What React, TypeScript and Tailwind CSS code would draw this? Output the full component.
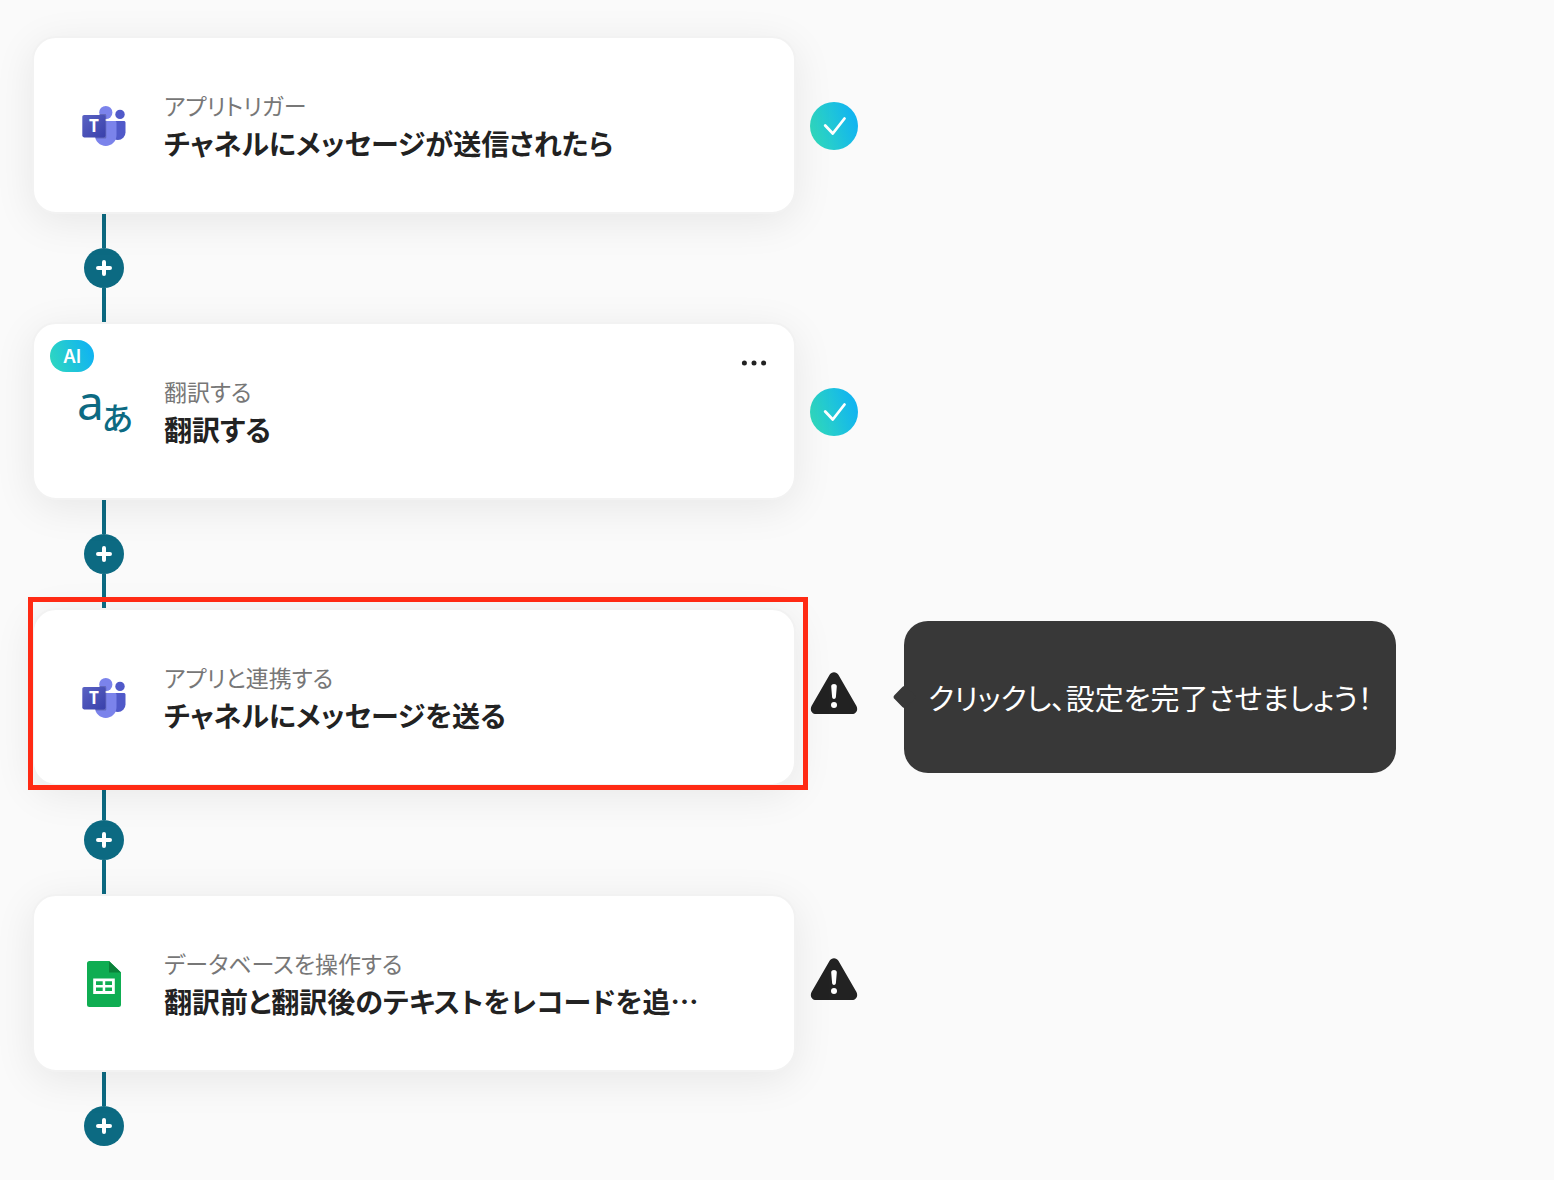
import React from 'react'
import clsx from 'clsx'

type TStep = {
  id: number
  icon: 'teams' | 'translate' | 'sheets'
  label: string
  title: string
  status: 'done' | 'warning'
  isAi?: boolean
  hasMenu?: boolean
  isSelected?: boolean
  hint?: string
}

const steps: TStep[] = [
  { id: 1, icon: 'teams', label: 'アプリトリガー', title: 'チャネルにメッセージが送信されたら', status: 'done' },
  { id: 2, icon: 'translate', label: '翻訳する', title: '翻訳する', status: 'done', isAi: true, hasMenu: true },
  {
    id: 3,
    icon: 'teams',
    label: 'アプリと連携する',
    title: 'チャネルにメッセージを送る',
    status: 'warning',
    isSelected: true,
    hint: 'クリックし、設定を完了させましょう！',
  },
  { id: 4, icon: 'sheets', label: 'データベースを操作する', title: '翻訳前と翻訳後のテキストをレコードを追…', status: 'warning' },
]

const TeamsIcon = () => (
  <svg className="size-12 shrink-0" viewBox="0 0 48 48" aria-hidden="true">
    <defs>
      <linearGradient id="teams-tile" x1="0" y1="0" x2="1" y2="1">
        <stop offset="0" stopColor="#5a62c3" />
        <stop offset="1" stopColor="#3940ab" />
      </linearGradient>
    </defs>
    <circle cx="40" cy="13.4" r="4.7" fill="#5059c9" />
    <path d="M34 20h9.800c1 0 1.700.7 1.700 1.700V31.500a7.600 7.600 0 0 1-7.600 7.600c-1.400 0-2.700-.4-3.900-1.100z" fill="#5059c9" />
    <circle cx="25.800" cy="11.500" r="6.600" fill="#7b83eb" />
    <path d="M16 20h18.800c1 0 1.700.7 1.700 1.700v12.500a10.750 10.750 0 0 1-21.500 0V21z" fill="#7b83eb" />
    <path d="M19.400 13h5.600c.9 0 1.300.7 1.300 1.600v21.400c0 1-.5 1.500-1.400 1.500H15.600c-.4-1.100-.6-2.300-.6-3.500V20h4.400z" fill="#000" opacity=".2" />
    <rect x="2.300" y="14" width="23.200" height="22.400" rx="1.800" fill="url(#teams-tile)" />
    <text x="13.900" y="31" textAnchor="middle" fontFamily="Open Sans, sans-serif" fontWeight="700" fontSize="17" fill="#fff">
      T
    </text>
  </svg>
)

const TranslateIcon = () => (
  <svg className="size-12 shrink-0 overflow-visible" viewBox="0 0 48 48" fill="#0c6a82" aria-hidden="true">
    <text x="-3" y="33" fontFamily="Noto Sans, sans-serif" fontSize="48">
      a
    </text>
    <text x="22" y="43" fontFamily="Noto Sans CJK JP, sans-serif" fontWeight="500" fontSize="32">
      あ
    </text>
  </svg>
)

const SheetsIcon = () => (
  <svg className="size-12 shrink-0" viewBox="0 0 48 48" aria-hidden="true">
    <path d="M9.500 2H29l12 11.500V45.500a2.500 2.500 0 0 1-2.500 2.500h-29A2.500 2.500 0 0 1 7 45.500v-41A2.500 2.500 0 0 1 9.500 2z" fill="#0fad52" />
    <path d="M29 2l12 11.500H29z" fill="#0a8139" />
    <path d="M13.200 19.500h21.600v15.500H13.200zM16 22.300v3.600h6.700v-3.600zM25.200 22.300v3.600h6.800v-3.600zM16 28.500v3.600h6.700v-3.600zM25.200 28.500v3.600h6.800v-3.600z" fill="#fff" fillRule="evenodd" />
  </svg>
)

const StepIcon = ({ icon }: { icon: TStep['icon'] }) => {
  if (icon === 'teams') return <TeamsIcon />
  if (icon === 'translate') return <TranslateIcon />
  return <SheetsIcon />
}

const StepStatus = ({ status }: { status: TStep['status'] }) => {
  if (status === 'done') {
    return (
      <span className="mt-0.5 ml-[14px] flex size-12 shrink-0 rounded-full bg-linear-[72deg] from-[#30d9bd] from-10% to-[#12b5ef] to-85%" role="img" aria-label="設定済み">
        <svg className="size-12" viewBox="0 0 48 48" fill="none" stroke="#fff" strokeWidth="2.800" strokeLinecap="round" strokeLinejoin="round">
          <path d="M15.200 23.500l7.600 8 11.700-15" />
        </svg>
      </span>
    )
  }
  return (
    <svg className="ml-[14px] h-14 w-12 shrink-0" viewBox="0 0 48 56" role="img" aria-label="未設定">
      <path
        d="M19.600 5.700C21.500 2.300 26.500 2.300 28.400 5.700L46.300 36.800C48.500 40.600 46.300 45 42 45H6C1.700 45-.5 40.600 1.700 36.800z"
        fill="#222"
      />
      <path d="M21.200 17.500c0-3.200 5.600-3.200 5.600 0l-.9 10.500c-.2 2.500-3.600 2.500-3.800 0z" fill="#fff" />
      <circle cx="24" cy="36" r="3" fill="#fff" />
    </svg>
  )
}

const Hint = ({ text }: { text: string }) => (
  <div role="tooltip" className="relative ml-[46px] flex min-h-[152px] items-center rounded-3xl bg-[#383838] px-6">
    <span className="absolute top-1/2 -left-2 size-[17px] -translate-y-1/2 rotate-45 rounded-[3px] bg-[#383838]" />
    <p className="relative text-[29px] leading-[38px] text-white">{text}</p>
  </div>
)

const AddStep = ({ isLast }: { isLast: boolean }) => (
  <div className="ml-[52px] flex w-10 flex-col items-center">
    <span className="h-[34px] w-1 bg-[#0c6a82]" />
    <button type="button" aria-label="ステップを追加" className="flex size-10 items-center justify-center rounded-full bg-[#0c6a82]">
      <svg className="size-4" viewBox="0 0 16 16" stroke="#fff" strokeWidth="4" strokeLinecap="round">
        <path d="M8 2v12M2 8h12" />
      </svg>
    </button>
    {!isLast && <span className="h-[34px] w-1 bg-[#0c6a82]" />}
  </div>
)

const StepCard = ({ step }: { step: TStep }) => (
  <div className="flex items-center">
    <div className="relative w-full max-w-[764px] min-w-0 shrink">
      <div className="relative flex min-h-[178px] items-center gap-9 rounded-3xl border-2 border-[#f2f2f2] bg-white pr-12 pl-[46px] shadow-[0_8px_40px_rgba(0,0,0,0.08)]">
        {step.isAi && (
          <span className="absolute top-4 left-4 flex h-8 w-11 items-center justify-center rounded-full bg-linear-[72deg] from-[#30d9bd] to-[#12b5ef] to-85% pt-px font-['Inter'] text-lg font-semibold text-white">
            AI
          </span>
        )}
        <StepIcon icon={step.icon} />
        <div className="min-w-0 pb-[3px]">
          <p className="text-[23px] leading-[38px] text-[#777]">{step.label}</p>
          <h2 className="text-[28px] leading-[38px] font-bold text-[#222]">{step.title}</h2>
        </div>
        {step.hasMenu && (
          <button type="button" aria-label="メニュー" className="absolute top-6 right-6 size-8">
            <svg className="size-8" viewBox="0 0 32 32" fill="#222">
              <circle cx="6.400" cy="15" r="2.500" />
              <circle cx="16" cy="15" r="2.500" />
              <circle cx="25.600" cy="15" r="2.500" />
            </svg>
          </button>
        )}
      </div>
      {step.isSelected && <span className="pointer-events-none absolute -top-[11px] -right-3 -bottom-1 -left-1 z-10 border-[5px] border-[#ff2a14]" />}
    </div>
    <StepStatus status={step.status} />
    {step.hint && <Hint text={step.hint} />}
  </div>
)

const App = () => {
  return (
    <main
      lang="ja"
      className={clsx(
        'min-h-screen bg-[#fafafa] px-8 pt-9 pb-[34px]',
        "font-['Noto_Sans_CJK_JP',sans-serif] [font-feature-settings:'palt']"
      )}
    >
      {steps.map((step, index) => (
        <section key={step.id}>
          <StepCard step={step} />
          <AddStep isLast={index === steps.length - 1} />
        </section>
      ))}
    </main>
  )
}

export default App
